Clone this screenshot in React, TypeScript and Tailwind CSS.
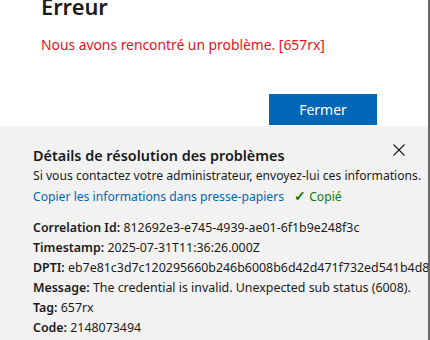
import React from "react";

const font = { fontFamily: '"Segoe UI", "Noto Sans", "Open Sans", sans-serif' };

function Row({ label, value }: { label: string; value: string }) {
  return (
    <div className="whitespace-nowrap leading-[20px] text-[12.4px] text-[#1b1b1b]">
      <span className="font-semibold">{label}:</span> {value}
    </div>
  );
}

export default function App() {
  return (
    <div className="w-[430px] h-[340px] overflow-hidden bg-white" style={font}>
      <div className="w-[430px] h-[340px] border-r-2 border-[#6a6a6a] overflow-hidden flex flex-col">
        <div className="pl-[41px] pr-[51px] h-[126px] flex flex-col shrink-0">
          <h1 className="-mt-[9px] text-[21.8px] leading-[32px] font-semibold text-[#1b1b1b]">Erreur</h1>
          <p className="mt-[12px] text-[13.85px] leading-[20px] text-[#e81123]">
            Nous avons rencontré un problème. [657rx]
          </p>
          <div className="mt-[39px] flex justify-end">
            <button className="w-[108px] h-[31px] bg-[#0067b8] text-white text-[14px] leading-[20px]">
              Fermer
            </button>
          </div>
        </div>
        <div className="relative flex-1 bg-[#f2f2f2] pt-[20px] pl-[33px]">
          <button className="absolute left-[392px] top-[17px] w-[14px] h-[14px] flex items-center justify-center">
            <svg width="12" height="12" viewBox="0 0 12 12" fill="none" stroke="#1b1b1b" strokeWidth="1.1">
              <path d="M0.5 0.5 L11.5 11.5 M11.5 0.5 L0.5 11.5" />
            </svg>
          </button>
          <h2 className="text-[14.4px] leading-[20px] font-semibold text-[#1b1b1b] whitespace-nowrap">
            Détails de résolution des problèmes
          </h2>
          <p className="text-[12.15px] leading-[19px] text-[#1b1b1b] whitespace-nowrap">
            Si vous contactez votre administrateur, envoyez-lui ces informations.
          </p>
          <div className="text-[12.15px] leading-[21px] whitespace-nowrap flex items-baseline gap-[10px]">
            <span className="text-[#0067b8]">Copier les informations dans presse-papiers</span>
            <span className="text-[#107c10]">
              <span className="text-[14px] font-semibold">✓</span> Copié
            </span>
          </div>
          <div className="mt-[11px]">
            <Row label="Correlation Id" value="812692e3-e745-4939-ae01-6f1b9e248f3c" />
            <Row label="Timestamp" value="2025-07-31T11:36:26.000Z" />
            <Row label="DPTI" value="eb7e81c3d7c120295660b246b6008b6d42d471f732ed541b4d8" />
            <Row label="Message" value="The credential is invalid. Unexpected sub status (6008)." />
            <Row label="Tag" value="657rx" />
            <Row label="Code" value="2148073494" />
          </div>
        </div>
      </div>
    </div>
  );
}
